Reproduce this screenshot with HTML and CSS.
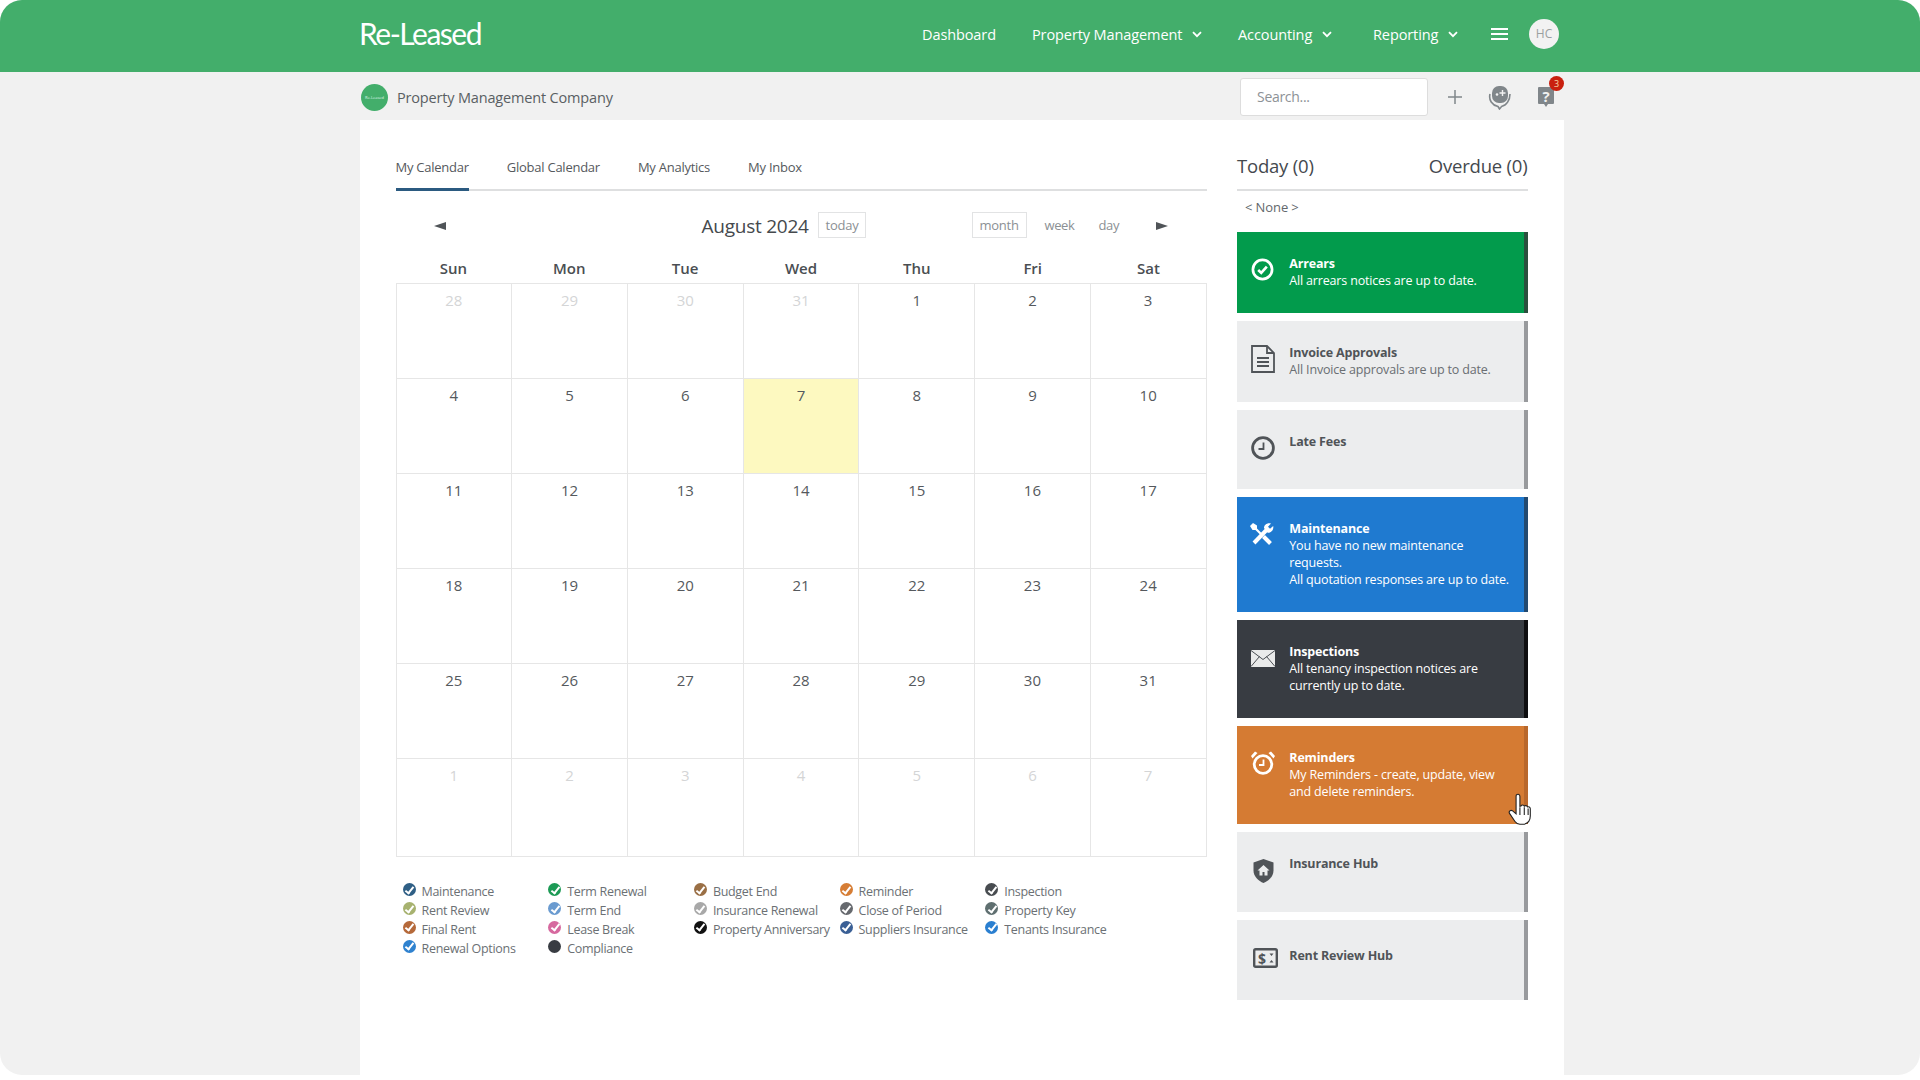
FILE: index.html
```html
<!DOCTYPE html>
<html lang="en">
<head>
    <meta charset="UTF-8">
    <title>Re-Leased</title>
    <link rel="stylesheet" href="styles.css">
</head>
<body>
<div class="window">
    <header class="topbar">
        <div class="wrap topbar-inner">
            <div class="logo">Re-Leased</div>
            <nav class="nav">
                <a class="nav-link nav-dash">Dashboard</a>
                <a class="nav-link nav-prop">Property Management <svg class="chev" viewBox="0 0 10 7"><path d="M1 1.200l4 4 4-4" /></svg></a>
                <a class="nav-link nav-acc">Accounting <svg class="chev" viewBox="0 0 10 7"><path d="M1 1.200l4 4 4-4" /></svg></a>
                <a class="nav-link nav-rep">Reporting <svg class="chev" viewBox="0 0 10 7"><path d="M1 1.200l4 4 4-4" /></svg></a>
            </nav>
            <div class="burger"><span></span><span></span><span></span></div>
            <div class="avatar">HC</div>
        </div>
    </header>

    <div class="wrap subbar">
        <div class="company-logo">Re-Leased</div>
        <div class="company-name">Property Management Company</div>
        <div class="search">Search...</div>
        <svg class="plus" viewBox="0 0 14 14"><path d="M7 0v14M0 7h14" /></svg>
        <svg class="chat" viewBox="0 0 24 25">
            <path class="chat-ring" d="M2 9c-1.500 6 2 11 8 12.500l1.500 2.500c1-1 1.500-1.500 2-2.500 5-1 8.500-6.500 8.500-12.500" />
            <rect class="chat-fill" x="4" y="1" width="16" height="17" rx="7" />
            <circle class="chat-dot" cx="9" cy="9.500" r="1.300" />
            <path class="chat-plus" d="M14.500 5v6M11.500 8h6" />
        </svg>
        <div class="help">
            <svg viewBox="0 0 18 22"><path d="M2 1h14a1 1 0 0 1 1 1v15a1 1 0 0 1-1 1h-5l-2 3-2-3H2a1 1 0 0 1-1-1V2a1 1 0 0 1 1-1z" /></svg>
            <span class="help-mark">?</span>
            <span class="badge">3</span>
        </div>
    </div>

    <main class="wrap panel">
        <section class="left">
            <div class="tabs">
                <a class="tab active">My Calendar</a>
                <a class="tab">Global Calendar</a>
                <a class="tab">My Analytics</a>
                <a class="tab">My Inbox</a>
            </div>

            <div class="toolbar">
                <span class="arrow arrow-left"></span>
                <div class="month-title">August 2024</div>
                <button class="btn btn-today">today</button>
                <button class="btn btn-month">month</button>
                <span class="view-link view-week">week</span>
                <span class="view-link view-day">day</span>
                <span class="arrow arrow-right"></span>
            </div>

            <div class="cal-head">
                <div>Sun</div><div>Mon</div><div>Tue</div><div>Wed</div><div>Thu</div><div>Fri</div><div>Sat</div>
            </div>
            <div class="cal-grid">
                <div class="day off">28</div><div class="day off">29</div><div class="day off">30</div><div class="day off">31</div><div class="day">1</div><div class="day">2</div><div class="day">3</div>
                <div class="day">4</div><div class="day">5</div><div class="day">6</div><div class="day now">7</div><div class="day">8</div><div class="day">9</div><div class="day">10</div>
                <div class="day">11</div><div class="day">12</div><div class="day">13</div><div class="day">14</div><div class="day">15</div><div class="day">16</div><div class="day">17</div>
                <div class="day">18</div><div class="day">19</div><div class="day">20</div><div class="day">21</div><div class="day">22</div><div class="day">23</div><div class="day">24</div>
                <div class="day">25</div><div class="day">26</div><div class="day">27</div><div class="day">28</div><div class="day">29</div><div class="day">30</div><div class="day">31</div>
                <div class="day off">1</div><div class="day off">2</div><div class="day off">3</div><div class="day off">4</div><div class="day off">5</div><div class="day off">6</div><div class="day off">7</div>
            </div>

            <div class="legend">
                <ul class="legend-col">
                    <li><i class="dot c-maint"></i>Maintenance</li>
                    <li><i class="dot c-rent"></i>Rent Review</li>
                    <li><i class="dot c-final"></i>Final Rent</li>
                    <li><i class="dot c-renew"></i>Renewal Options</li>
                </ul>
                <ul class="legend-col">
                    <li><i class="dot c-term"></i>Term Renewal</li>
                    <li><i class="dot c-end"></i>Term End</li>
                    <li><i class="dot c-break"></i>Lease Break</li>
                    <li><i class="dot c-comp nocheck"></i>Compliance</li>
                </ul>
                <ul class="legend-col">
                    <li><i class="dot c-budget"></i>Budget End</li>
                    <li><i class="dot c-insr"></i>Insurance Renewal</li>
                    <li><i class="dot c-anniv"></i>Property Anniversary</li>
                </ul>
                <ul class="legend-col">
                    <li><i class="dot c-remind"></i>Reminder</li>
                    <li><i class="dot c-close"></i>Close of Period</li>
                    <li><i class="dot c-supp"></i>Suppliers Insurance</li>
                </ul>
                <ul class="legend-col">
                    <li><i class="dot c-insp"></i>Inspection</li>
                    <li><i class="dot c-key"></i>Property Key</li>
                    <li><i class="dot c-ten"></i>Tenants Insurance</li>
                </ul>
            </div>
        </section>

        <aside class="right">
            <div class="today-row">
                <span>Today (0)</span>
                <span>Overdue (0)</span>
            </div>
            <div class="none">&lt; None &gt;</div>

            <div class="card card-green">
                <svg class="icon i-check" viewBox="0 0 24 24"><circle class="ln" cx="12" cy="12" r="10" /><path class="ln" d="M7.500 12.500l3.200 3 5.800-6.500" /></svg>
                <div class="card-text"><b>Arrears</b><br>All arrears notices are up to date.</div>
            </div>
            <div class="card card-grey">
                <svg class="icon i-doc" viewBox="0 0 24 28"><path class="ln thin" d="M1 1h15l7 7v19H1z" /><path class="ln thin" d="M16 1v7h7M6 13h12M6 17h12M6 21h12" /></svg>
                <div class="card-text"><b>Invoice Approvals</b><br>All Invoice approvals are up to date.</div>
            </div>
            <div class="card card-grey card-late">
                <svg class="icon i-clock" viewBox="0 0 24 24"><circle class="ln" cx="12" cy="12" r="10.400" /><path class="ln thin" d="M12.500 6.500v6.500H7.500" /></svg>
                <div class="card-text"><b>Late Fees</b></div>
            </div>
            <div class="card card-blue">
                <svg class="icon i-tools" viewBox="0 0 24 23">
                    <path class="ln wide" d="M4 20L17 6.500" />
                    <path class="fl" d="M14 5c0-3 3-5.500 7-4.500L18 3.800l2 2L23.200 3c.8 4-2 7-5.500 6.800z" />
                    <path class="ln mid" d="M4 4l7 7" />
                    <path class="fl" d="M0 3L3 0l4 2.500L7 6 6 7 2.500 7z" />
                    <path class="ln wide" d="M13.500 13.500L20.500 20.500" />
                </svg>
                <div class="card-text"><b>Maintenance</b><br>You have no new maintenance requests.<br>All quotation responses are up to date.</div>
            </div>
            <div class="card card-dark">
                <svg class="icon i-mail" viewBox="0 0 24 17">
                    <rect class="mail-body" width="24" height="17" />
                    <path class="mail-fold" d="M0 .5l12 9 12-9M0 16.500l8.500-10M24 16.500l-8.500-10" />
                </svg>
                <div class="card-text"><b>Inspections</b><br>All tenancy inspection notices are currently up to date.</div>
            </div>
            <div class="card card-orange">
                <svg class="icon i-alarm" viewBox="0 0 24 24"><circle class="ln" cx="12" cy="13.500" r="8.800" /><path class="ln thin" d="M12.500 8.500v5.500H8" /><path class="fl" d="M0 5l4-4.500 2.500 1.500L1.500 7.500zM24 5l-4-4.500-2.500 1.500 5 5.500z" /></svg>
                <div class="card-text"><b>Reminders</b><br>My Reminders - create, update, view and delete reminders.</div>
            </div>
            <div class="card card-grey">
                <svg class="icon i-shield" viewBox="0 0 21 24"><path class="fl" d="M10.500 0l10 3.500v8c0 6-5 10.500-10 12.500-5-2-10-6.500-10-12.500v-8z" /><path class="hole" d="M10.500 6l6 5.500h-2v5h-3v-3.500h-2v3.500h-3v-5h-2z" /></svg>
                <div class="card-text"><b>Insurance Hub</b></div>
            </div>
            <div class="card card-grey card-rent">
                <svg class="icon i-rent" viewBox="0 0 25 20">
                    <rect class="ln thick" x="1.200" y="1.200" width="22.600" height="17.600" rx="1.500" />
                    <text class="rent-sign" x="5" y="15.500">$</text>
                    <path class="fl" d="M16.500 5.500h4l-2 2.500zM16.500 14.500h4l-2-2.500z" />
                </svg>
                <div class="card-text"><b>Rent Review Hub</b></div>
            </div>
        </aside>
    </main>

    <svg class="cursor" viewBox="0 0 24 32">
        <path d="M8 2.500c1.500-1 3 0 3 1.500v9l1-.2c.6-1.300 2.600-1.200 3 .2.800-.9 2.500-.700 2.900.6 1-.5 2.600.2 2.600 1.800v6.600c0 3.500-2 6.500-5.500 7.500H11c-2 0-3.500-1-4.500-2.500L1.500 19.500c-1-1.500 1-3.500 2.600-2.400L7.500 20V4c0-.7.100-1.100.5-1.500z" />
        <path d="M11 14v7M15 14v7M18.500 15v6" />
    </svg>
</div>
</body>
</html>
```

FILE: styles.css
```css
html, body {
    margin: 0;
    padding: 0;
    background: #ffffff;
}

body {
    font-family: "Open Sans", "Liberation Sans", sans-serif;
    color: #44494e;
}

.window {
    position: relative;
    width: 1920px;
    height: 1075px;
    overflow: hidden;
    background: #f1f1f1;
    border-radius: 22px;
}

.wrap {
    width: 1204px;
    margin-left: 360px;
}

/* top green bar */
.topbar {
    height: 72px;
    background: #43ae6b;
}

.topbar-inner {
    display: flex;
    align-items: center;
    height: 68px;
    color: #ffffff;
}

.logo {
    width: 563px;
    margin: -2px 0 0 -1px;
    font-family: "Lato", sans-serif;
    font-size: 30px;
    font-weight: 400;
    letter-spacing: -1.500px;
}

.nav {
    display: flex;
    align-items: center;
}

.nav-link {
    display: flex;
    align-items: center;
    font-size: 14.500px;
    letter-spacing: -.1px;
    color: #ffffff;
    white-space: nowrap;
}

.nav-dash { width: 110px; }
.nav-prop { width: 206px; }
.nav-acc { width: 135px; }
.nav-rep { width: 100px; }

.chev {
    width: 10px;
    height: 7px;
    margin-left: 10px;
    fill: none;
    stroke: #ffffff;
    stroke-width: 1.800;
}

.burger {
    width: 17px;
    margin-left: 18px;
}

.burger span {
    display: block;
    height: 2px;
    background: #ffffff;
    margin: 3px 0;
}

.avatar {
    width: 30px;
    height: 30px;
    margin-left: 21px;
    border-radius: 50%;
    background: #f2f2f2;
    color: #9aa0a0;
    font-size: 12px;
    line-height: 30px;
    text-align: center;
}

/* company row */
.subbar {
    display: flex;
    align-items: center;
    box-sizing: border-box;
    height: 48px;
    padding-top: 2px;
}

.company-logo {
    width: 27px;
    height: 27px;
    margin-left: 1px;
    border-radius: 50%;
    background: #43ae6b;
    color: #dff3e6;
    font-size: 4px;
    line-height: 27px;
    text-align: center;
    white-space: nowrap;
    overflow: hidden;
}

.company-name {
    width: 843px;
    margin-left: 9px;
    font-size: 14.500px;
    letter-spacing: -.17px;
    color: #5a5f63;
}

.search {
    box-sizing: border-box;
    width: 188px;
    height: 38px;
    padding-left: 16px;
    border: 1px solid #dddddd;
    border-radius: 3px;
    background: #ffffff;
    color: #8d9296;
    font-size: 14px;
    letter-spacing: -.3px;
    line-height: 36px;
}

.plus {
    width: 14px;
    height: 14px;
    margin-left: 20px;
    fill: none;
    stroke: #80868a;
    stroke-width: 1.500;
}

.chat {
    width: 24px;
    height: 25px;
    margin-left: 26px;
}

.chat-ring {
    fill: none;
    stroke: #80868a;
    stroke-width: 1.600;
}

.chat-fill { fill: #80868a; }
.chat-dot { fill: #f1f1f1; }

.chat-plus {
    fill: none;
    stroke: #f1f1f1;
    stroke-width: 1.400;
}

.help {
    position: relative;
    width: 18px;
    height: 22px;
    margin-left: 25px;
}

.help svg {
    width: 18px;
    height: 22px;
    fill: #80868a;
}

.help-mark {
    position: absolute;
    left: 0;
    top: 0;
    width: 18px;
    color: #f1f1f1;
    font-size: 15px;
    font-weight: 700;
    line-height: 20px;
    text-align: center;
}

.badge {
    position: absolute;
    left: 12px;
    top: -10px;
    width: 15px;
    height: 15px;
    border-radius: 50%;
    background: #c9200f;
    color: #f7d8a8;
    font-size: 9px;
    line-height: 15px;
    text-align: center;
}

/* white panel */
.panel {
    display: flex;
    box-sizing: border-box;
    height: 955px;
    padding: 0 36.500px 0 35.500px;
    background: #ffffff;
}

.left {
    width: 811px;
}

.right {
    width: 290.500px;
    margin-left: 30.500px;
}

.tabs {
    display: flex;
    box-sizing: border-box;
    height: 71px;
    border-bottom: 2px solid #dedfe0;
}

.tab {
    box-sizing: border-box;
    height: 71px;
    margin-right: 38px;
    padding-top: 38px;
    font-size: 13px;
    letter-spacing: -.25px;
    color: #55595d;
}

.tab.active {
    border-bottom: 3px solid #2b5a80;
}

.toolbar {
    position: relative;
    height: 34px;
    margin-top: 18px;
    color: #8b9094;
}

.month-title {
    position: absolute;
    left: 306px;
    top: 4px;
    font-size: 19px;
    letter-spacing: -.25px;
    color: #45494d;
}

.btn {
    position: absolute;
    top: 3px;
    box-sizing: border-box;
    height: 26px;
    padding: 0 7px;
    border: 1px solid #e2e3e4;
    background: #ffffff;
    color: #8b9094;
    font-family: inherit;
    font-size: 13px;
    letter-spacing: -.25px;
}

.btn-today { left: 422px; }
.btn-month { left: 576px; }

.view-link {
    position: absolute;
    top: 7px;
    font-size: 13px;
    letter-spacing: -.4px;
}

.view-week { left: 649px; }
.view-day { left: 703px; }

.arrow {
    position: absolute;
    top: 13px;
    width: 0;
    height: 0;
    border-top: 4px solid transparent;
    border-bottom: 4px solid transparent;
}

.arrow-left {
    left: 38px;
    border-right: 12px solid #505458;
}

.arrow-right {
    left: 760px;
    border-left: 12px solid #505458;
}

.cal-head {
    display: grid;
    grid-template-columns: repeat(7, 1fr);
    box-sizing: border-box;
    height: 40px;
    padding-top: 7px;
    font-size: 15px;
    font-weight: 600;
    line-height: 36px;
    text-align: center;
    color: #4a4e52;
}

.cal-grid {
    display: grid;
    grid-template-columns: repeat(7, 1fr);
    grid-template-rows: repeat(5, 95.100px) 98px;
    border-top: 1px solid #e6e6e6;
    border-left: 1px solid #e6e6e6;
}

.day {
    border-right: 1px solid #e6e6e6;
    border-bottom: 1px solid #e6e6e6;
    padding-top: 6px;
    font-size: 15px;
    line-height: 20px;
    text-align: center;
    color: #55595d;
}

.day.off { color: #d4d5d6; }
.day.now { background: #fdf9c0; }

/* legend under the calendar */
.legend {
    display: flex;
    margin-top: 26px;
    padding-left: 7px;
}

.legend-col {
    width: 145.700px;
    margin: 0;
    padding: 0;
    list-style: none;
}

.legend-col li {
    display: flex;
    align-items: flex-start;
    height: 18.700px;
    font-size: 12.500px;
    letter-spacing: -.3px;
    line-height: 18.700px;
    color: #6b7074;
    white-space: nowrap;
}

.dot {
    position: relative;
    flex: none;
    width: 13px;
    height: 13px;
    margin-right: 6px;
    border-radius: 50%;
}

.dot::after {
    content: "";
    position: absolute;
    left: 4.500px;
    top: 1.500px;
    width: 3px;
    height: 7px;
    border-right: 2px solid #ffffff;
    border-bottom: 2px solid #ffffff;
    transform: rotate(38deg);
}

.dot.nocheck::after { display: none; }

.c-maint { background: #2f5f85; }
.c-rent { background: #a7b26f; }
.c-final { background: #b5693a; }
.c-renew { background: #2f82cf; }
.c-term { background: #1c9a55; }
.c-end { background: #6a9bd0; }
.c-break { background: #d6699f; }
.c-comp { background: #383c42; }
.c-budget { background: #9a6f45; }
.c-insr { background: #a8a8a8; }
.c-anniv { background: #111111; }
.c-remind { background: #d67d35; }
.c-close { background: #66696e; }
.c-supp { background: #3a5f95; }
.c-insp { background: #484c50; }
.c-key { background: #5f6f70; }
.c-ten { background: #2a7fd0; }

/* right column */
.today-row {
    display: flex;
    justify-content: space-between;
    box-sizing: border-box;
    height: 71px;
    padding-top: 33px;
    border-bottom: 2px solid #dedfe0;
    font-size: 18.500px;
    letter-spacing: -.2px;
    color: #44494e;
}

.none {
    box-sizing: border-box;
    height: 41px;
    padding: 7px 0 0 8px;
    font-size: 13px;
    letter-spacing: -.1px;
    color: #63686c;
}

.card {
    display: grid;
    grid-template-columns: 38.300px 1fr;
    align-items: start;
    box-sizing: border-box;
    min-height: 80px;
    margin-bottom: 8px;
    padding: 23px 6px 24px 14px;
    border-right: 4px solid #989a9d;
    font-size: 12.500px;
    letter-spacing: -.17px;
    line-height: 17px;
}

.card b {
    font-weight: 700;
}

.card-late { min-height: 79px; }
.card-rent { padding-top: 27px; }

.icon {
    display: block;
    width: 24px;
    height: 24px;
}

.i-check { width: 23px; height: 23px; margin-top: 3px; }
.i-doc { height: 28px; margin-top: 1px; }
.i-clock { margin-top: 3px; }
.i-tools { height: 23px; margin-top: 3px; margin-left: -1px; }
.i-mail { height: 17px; margin-top: 7px; }
.i-alarm { margin-top: 2px; }
.i-shield { width: 21px; margin-top: 4px; margin-left: 2px; }
.i-rent { width: 25px; height: 20px; margin-top: 1px; margin-left: 2px; }

.ln {
    fill: none;
    stroke: currentColor;
    stroke-width: 2.800;
}

.ln.thin { stroke-width: 1.800; }
.ln.thick { stroke-width: 2.400; }
.ln.mid { stroke-width: 2.200; }
.ln.wide { stroke-width: 4; }
.fl { fill: currentColor; }
.hole { fill: #ecedee; }
.mail-body { fill: #e9eaea; }

.mail-fold {
    fill: none;
    stroke: #383c42;
    stroke-width: .9;
}

.rent-sign {
    fill: currentColor;
    font-size: 14px;
    font-weight: 700;
}

.card-green { background: #029b4c; border-right-color: #2b4f3e; color: #ffffff; }
.card-grey { background: #ecedee; color: #6a6e72; }
.card-grey b, .card-grey .icon { color: #505458; }
.card-blue { background: #1f7ad0; border-right-color: #234a70; color: #ffffff; }
.card-dark { background: #383c42; border-right-color: #0e0e10; color: #ffffff; }
.card-orange { background: #d57b33; border-right-color: #b9682c; color: #ffffff; }

/* mouse pointer from the recording */
.cursor {
    position: absolute;
    left: 1507px;
    top: 792px;
    width: 28px;
    height: 35px;
    fill: #ffffff;
    stroke: #222222;
    stroke-width: 1;
}
```
